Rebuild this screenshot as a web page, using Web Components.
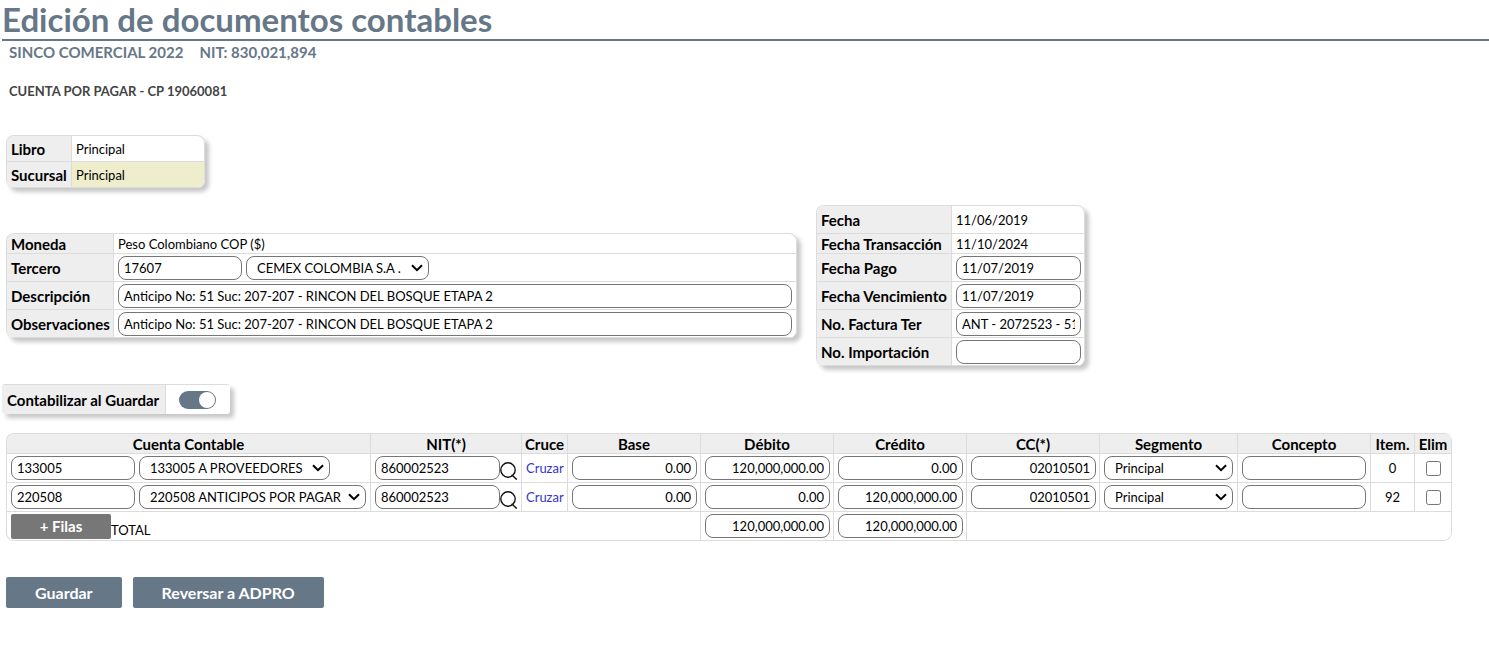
<!DOCTYPE html>
<html lang="es">
<head>
<meta charset="utf-8">
<title>Edición de documentos contables</title>
<style>
  body {
    margin: 0;
    background: #fff;
    color: #000;
    font: 13px/18px Lato, "Open Sans", sans-serif;
    --brand: #667788;
    --line: #dcdcdc;
    --head: #eeeeee;
  }
</style>
</head>
<body>
<document-page></document-page>

<script>
const controlCss = `
  * { box-sizing: border-box; }
  input, select, button { font: inherit; color: inherit; margin: 0; }
  input.box, select {
    height: 24px;
    border: 1px solid #767676;
    border-radius: 8px;
    background: #fff;
  }
  input.box { width: 125px; padding: 0 5px; }
  input.code { width: 124px; }
  select {
    appearance: none;
    padding: 0 20px 0 10px;
    background: #fff url("data:image/svg+xml,%3Csvg xmlns='http://www.w3.org/2000/svg' width='12' height='8' fill='none' stroke='%23000' stroke-width='2'%3E%3Cpath d='M1 1.2 6 6.2 11 1.2'/%3E%3C/svg%3E") no-repeat right 5px center;
  }
`;

function define(name, html, setup) {
  const template = document.createElement('template');
  template.innerHTML = html;
  customElements.define(name, class extends HTMLElement {
    constructor() {
      super();
      this.attachShadow({ mode: 'open' }).append(template.content.cloneNode(true));
    }
    connectedCallback() {
      if (setup && !this.ready) { this.ready = true; setup(this, this.shadowRoot); }
    }
  });
}

define('page-title', `
  <style>
    :host { display: block; color: var(--brand); }
    h1 { margin: 0 0 0 2px; border-bottom: 2px solid var(--brand); font-size: 33px; line-height: 39px; font-weight: 700; }
    .company { display: flex; gap: 16px; padding: 1px 9px 0; font-size: 15px; line-height: 20px; font-weight: 700; }
    h2 { margin: 19px 9px 0; color: #444; font-size: 13px; line-height: 20px; font-weight: 700; }
  </style>
  <h1><slot></slot></h1>
  <div class="company"><slot name="company"></slot><slot name="nit"></slot></div>
  <h2><slot name="document"></slot></h2>
`);

define('form-panel', `
  <style>
    :host {
      display: block;
      box-sizing: border-box;
      border: 1px solid var(--line);
      border-bottom: 0;
      border-radius: 8px;
      overflow: hidden;
      box-shadow: 4px 4px 4px rgba(0, 0, 0, .22);
    }
    :host([square]) { border-color: var(--line) transparent var(--line) var(--head); border-radius: 3px; }
  </style>
  <slot></slot>
`);

/* One labelled row of a panel: plain text, a text box, or a text box with a list. */
define('form-row', `
  <style>
    ${controlCss}
    :host { display: grid; grid-template-columns: var(--label) 1fr; min-height: 28px; box-sizing: border-box; border-bottom: 1px solid var(--line); }
    :host([short]) { min-height: 20px; }
    :host([medium]) { min-height: 26px; }
    .name { display: flex; align-items: center; padding-left: 4px; background: var(--head); border-right: 1px solid var(--line); font-size: 15px; font-weight: 700; white-space: nowrap; }
    .value { display: flex; align-items: center; gap: 4px; padding: 0 4px; min-width: 0; }
    :host([tinted]) .value { background: #eeeecc; }
    :host([wide]) input.box { width: 100%; }
  </style>
  <label class="name" for="control"></label>
  <div class="value"></div>
`, (host, root) => {
  root.querySelector('.name').textContent = host.getAttribute('label');
  const value = root.querySelector('.value');
  if (host.hasAttribute('text')) {
    const out = document.createElement('output');
    out.id = 'control';
    out.textContent = host.getAttribute('text');
    value.append(out);
    return;
  }
  const input = document.createElement('input');
  input.id = 'control';
  input.className = 'box';
  input.value = host.getAttribute('value') || '';
  value.append(input);
  if (host.hasAttribute('option')) {
    input.classList.add('code');
    const select = document.createElement('select');
    select.setAttribute('aria-label', host.getAttribute('label'));
    select.style.width = '183px';
    select.add(new Option(host.getAttribute('option')));
    value.append(select);
  }
});

define('switch-row', `
  <style>
    * { box-sizing: border-box; }
    :host { display: flex; height: 29px; }
    label { display: flex; align-items: center; width: 163px; padding-left: 4px; background: var(--head); border-right: 1px solid var(--line); font-size: 15px; font-weight: 700; white-space: nowrap; }
    .value { flex: 1; display: grid; place-items: center; background: #fff; }
    input { appearance: none; display: flex; justify-content: flex-end; width: 37px; height: 18px; margin: 0; padding: 1px; border-radius: 9px; background: var(--brand); }
    input::before { content: ""; width: 16px; height: 16px; border-radius: 50%; background: #fff; }
    input:not(:checked) { justify-content: flex-start; background: #bbb; }
  </style>
  <label for="switch"><slot></slot></label>
  <div class="value"><input id="switch" type="checkbox" role="switch" checked></div>
`);

define('action-button', `
  <style>
    :host { display: block; }
    button { display: block; width: 100%; height: 31px; padding: 0 29px; border: 0; border-radius: 2px; background: var(--brand); color: #fff; font: inherit; font-size: 16px; font-weight: 700; }
    :host([small]) button { width: 100px; height: 25px; padding: 0; background: #777; font-size: 15px; }
  </style>
  <button type="button"><slot></slot></button>
`);

define('search-button', `
  <style>
    :host { display: block; }
    button { display: block; width: 18px; height: 18px; padding: 0; border: 0; background: none; }
    svg { display: block; }
  </style>
  <button type="button" aria-label="Buscar">
    <svg width="18" height="18" viewBox="0 0 18 18" fill="none" stroke="#111" stroke-width="1.4">
      <circle cx="8" cy="8" r="7.2"/><path d="M11.6 12.8 16.8 17.6"/>
    </svg>
  </button>
`);

define('entry-table', `
  <style>
    ${controlCss}
    :host { display: block; }
    table { table-layout: fixed; width: 0; border-collapse: separate; border-spacing: 0; border: 1px solid var(--line); border-right: 0; border-bottom: 0; border-radius: 8px; overflow: hidden; }
    th, td { padding: 0 4px; border-right: 1px solid var(--line); border-bottom: 1px solid var(--line); }
    th { height: 20px; padding: 0; background: var(--head); font-size: 15px; font-weight: 700; white-space: nowrap; }
    td { height: 29px; }
    tr:last-child td:first-child { border-bottom-left-radius: 8px; }
    tr:last-child td:last-child { border-bottom-right-radius: 8px; }
    .flex { display: flex; align-items: center; gap: 4px; }
    .nit { display: flex; align-items: flex-end; height: 24px; }
    .num { text-align: right; }
    .mid { text-align: center; }
    a { color: #3333cc; text-decoration: none; }
    td > input.box, td > select { display: block; }
    input[type=checkbox] { display: block; width: 15px; height: 15px; margin: 0 auto; }
    .seg { width: 129px; }
    .total { display: flex; align-items: flex-end; }
  </style>
  <table>
    <colgroup></colgroup>
    <thead><tr></tr></thead>
    <tbody></tbody>
  </table>
`, (host, root) => {
  const columns = [['Cuenta Contable', 364], ['NIT(*)', 151], ['Cruce', 46], ['Base', 133], ['Débito', 133], ['Crédito', 133], ['CC(*)', 133], ['Segmento', 138], ['Concepto', 133], ['Item.', 44], ['Elim', 37]];
  root.querySelector('colgroup').innerHTML = columns.map(c => `<col style="width:${c[1]}px">`).join('');
  root.querySelector('thead tr').innerHTML = columns.map(c => `<th scope="col">${c[0]}</th>`).join('');
  const box = (label, value, cls = '') => `<input class="box ${cls}" aria-label="${label}" value="${value}">`;
  const rows = [
    ['133005', '133005 A PROVEEDORES', 191, '120,000,000.00', '0.00', '0'],
    ['220508', '220508 ANTICIPOS POR PAGAR', 228, '0.00', '120,000,000.00', '92']
  ];
  root.querySelector('tbody').innerHTML = rows.map(([code, account, width, debit, credit, item]) => `
    <tr>
      <td><div class="flex">${box('Cuenta', code, 'code')}<select aria-label="Cuenta Contable" style="width:${width}px"><option>${account}</option></select></div></td>
      <td><div class="nit">${box('NIT', '860002523')}<search-button></search-button></div></td>
      <td class="mid"><a href="#">Cruzar</a></td>
      <td>${box('Base', '0.00', 'num')}</td>
      <td>${box('Débito', debit, 'num')}</td>
      <td>${box('Crédito', credit, 'num')}</td>
      <td>${box('CC', '02010501', 'num')}</td>
      <td><select class="seg" aria-label="Segmento"><option>Principal</option></select></td>
      <td>${box('Concepto', '', 'code')}</td>
      <td class="mid">${item}</td>
      <td class="mid"><input type="checkbox" aria-label="Eliminar"></td>
    </tr>`).join('') + `
    <tr>
      <td colspan="4"><div class="total"><action-button small>+ Filas</action-button><span>TOTAL</span></div></td>
      <td>${box('Total débito', '120,000,000.00', 'num')}</td>
      <td>${box('Total crédito', '120,000,000.00', 'num')}</td>
      <td colspan="5"></td>
    </tr>`;
});

define('document-page', `
  <style>
    :host { display: block; }
    main { padding: 0 6px 40px; }
    .book { width: 199px; --label: 65px; margin-top: 34px; }
    .details { display: flex; align-items: center; gap: 19px; margin-top: 17px; }
    .general { width: 791px; --label: 107px; }
    .dates { width: 269px; --label: 135px; }
    .post { width: 228px; margin: 18px 0 0 -4px; }
    entry-table { margin-top: 19px; }
    .actions { display: flex; gap: 11px; margin-top: 36px; }
  </style>
  <page-title>Edición de documentos contables
    <span slot="company">SINCO COMERCIAL 2022</span>
    <span slot="nit">NIT: 830,021,894</span>
    <span slot="document">CUENTA POR PAGAR - CP 19060081</span>
  </page-title>
  <main>
    <form-panel class="book">
      <form-row medium label="Libro" text="Principal"></form-row>
      <form-row medium tinted label="Sucursal" text="Principal"></form-row>
    </form-panel>
    <div class="details">
      <form-panel class="general">
        <form-row short label="Moneda" text="Peso Colombiano COP ($)"></form-row>
        <form-row label="Tercero" value="17607" option="CEMEX COLOMBIA S.A ."></form-row>
        <form-row wide label="Descripción" value="Anticipo No: 51 Suc: 207-207 - RINCON DEL BOSQUE ETAPA 2"></form-row>
        <form-row wide label="Observaciones" value="Anticipo No: 51 Suc: 207-207 - RINCON DEL BOSQUE ETAPA 2"></form-row>
      </form-panel>
      <form-panel class="dates">
        <form-row label="Fecha" text="11/06/2019"></form-row>
        <form-row short label="Fecha Transacción" text="11/10/2024"></form-row>
        <form-row label="Fecha Pago" value="11/07/2019"></form-row>
        <form-row label="Fecha Vencimiento" value="11/07/2019"></form-row>
        <form-row label="No. Factura Ter" value="ANT - 2072523 - 51"></form-row>
        <form-row label="No. Importación" value=""></form-row>
      </form-panel>
    </div>
    <form-panel square class="post"><switch-row>Contabilizar al Guardar</switch-row></form-panel>
    <entry-table></entry-table>
    <div class="actions">
      <action-button>Guardar</action-button>
      <action-button>Reversar a ADPRO</action-button>
    </div>
  </main>
`);
</script>
</body>
</html>
